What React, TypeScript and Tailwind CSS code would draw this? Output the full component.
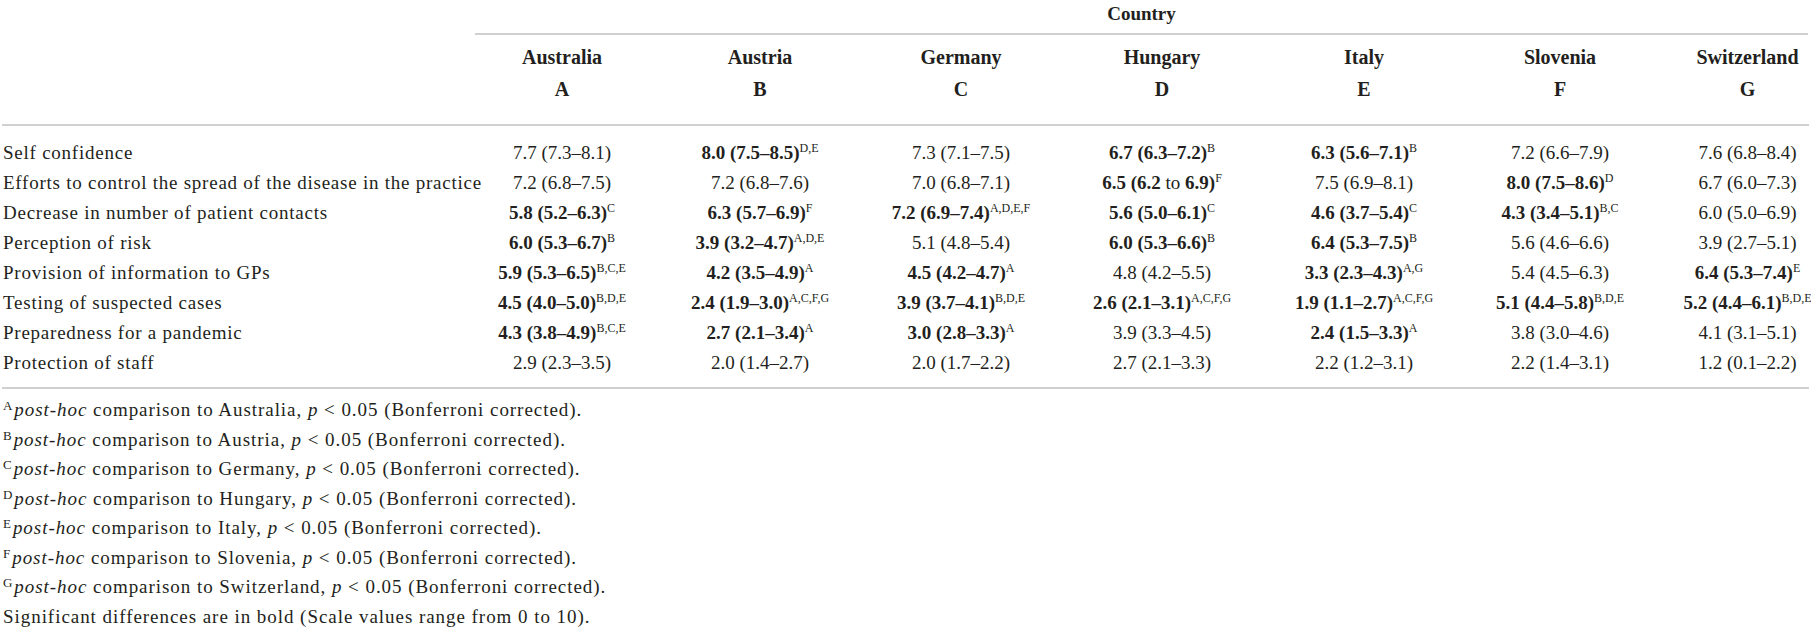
import React from 'react'

type Cell = { v: string; b?: boolean; sup?: string; to?: boolean }

const countries = [
  { name: "Australia", letter: "A" },
  { name: "Austria", letter: "B" },
  { name: "Germany", letter: "C" },
  { name: "Hungary", letter: "D" },
  { name: "Italy", letter: "E" },
  { name: "Slovenia", letter: "F" },
  { name: "Switzerland", letter: "G" },
]

const rows: { label: string; cells: Cell[] }[] = [
  {
    label: "Self confidence",
    cells: [
      { v: "7.7 (7.3–8.1)" },
      { v: "8.0 (7.5–8.5)", b: true, sup: "D,E" },
      { v: "7.3 (7.1–7.5)" },
      { v: "6.7 (6.3–7.2)", b: true, sup: "B" },
      { v: "6.3 (5.6–7.1)", b: true, sup: "B" },
      { v: "7.2 (6.6–7.9)" },
      { v: "7.6 (6.8–8.4)" },
    ],
  },
  {
    label: "Efforts to control the spread of the disease in the practice",
    cells: [
      { v: "7.2 (6.8–7.5)" },
      { v: "7.2 (6.8–7.6)" },
      { v: "7.0 (6.8–7.1)" },
      { v: "6.5 (6.2|6.9)", b: true, sup: "F", to: true },
      { v: "7.5 (6.9–8.1)" },
      { v: "8.0 (7.5–8.6)", b: true, sup: "D" },
      { v: "6.7 (6.0–7.3)" },
    ],
  },
  {
    label: "Decrease in number of patient contacts",
    cells: [
      { v: "5.8 (5.2–6.3)", b: true, sup: "C" },
      { v: "6.3 (5.7–6.9)", b: true, sup: "F" },
      { v: "7.2 (6.9–7.4)", b: true, sup: "A,D,E,F" },
      { v: "5.6 (5.0–6.1)", b: true, sup: "C" },
      { v: "4.6 (3.7–5.4)", b: true, sup: "C" },
      { v: "4.3 (3.4–5.1)", b: true, sup: "B,C" },
      { v: "6.0 (5.0–6.9)" },
    ],
  },
  {
    label: "Perception of risk",
    cells: [
      { v: "6.0 (5.3–6.7)", b: true, sup: "B" },
      { v: "3.9 (3.2–4.7)", b: true, sup: "A,D,E" },
      { v: "5.1 (4.8–5.4)" },
      { v: "6.0 (5.3–6.6)", b: true, sup: "B" },
      { v: "6.4 (5.3–7.5)", b: true, sup: "B" },
      { v: "5.6 (4.6–6.6)" },
      { v: "3.9 (2.7–5.1)" },
    ],
  },
  {
    label: "Provision of information to GPs",
    cells: [
      { v: "5.9 (5.3–6.5)", b: true, sup: "B,C,E" },
      { v: "4.2 (3.5–4.9)", b: true, sup: "A" },
      { v: "4.5 (4.2–4.7)", b: true, sup: "A" },
      { v: "4.8 (4.2–5.5)" },
      { v: "3.3 (2.3–4.3)", b: true, sup: "A,G" },
      { v: "5.4 (4.5–6.3)" },
      { v: "6.4 (5.3–7.4)", b: true, sup: "E" },
    ],
  },
  {
    label: "Testing of suspected cases",
    cells: [
      { v: "4.5 (4.0–5.0)", b: true, sup: "B,D,E" },
      { v: "2.4 (1.9–3.0)", b: true, sup: "A,C,F,G" },
      { v: "3.9 (3.7–4.1)", b: true, sup: "B,D,E" },
      { v: "2.6 (2.1–3.1)", b: true, sup: "A,C,F,G" },
      { v: "1.9 (1.1–2.7)", b: true, sup: "A,C,F,G" },
      { v: "5.1 (4.4–5.8)", b: true, sup: "B,D,E" },
      { v: "5.2 (4.4–6.1)", b: true, sup: "B,D,E" },
    ],
  },
  {
    label: "Preparedness for a pandemic",
    cells: [
      { v: "4.3 (3.8–4.9)", b: true, sup: "B,C,E" },
      { v: "2.7 (2.1–3.4)", b: true, sup: "A" },
      { v: "3.0 (2.8–3.3)", b: true, sup: "A" },
      { v: "3.9 (3.3–4.5)" },
      { v: "2.4 (1.5–3.3)", b: true, sup: "A" },
      { v: "3.8 (3.0–4.6)" },
      { v: "4.1 (3.1–5.1)" },
    ],
  },
  {
    label: "Protection of staff",
    cells: [
      { v: "2.9 (2.3–3.5)" },
      { v: "2.0 (1.4–2.7)" },
      { v: "2.0 (1.7–2.2)" },
      { v: "2.7 (2.1–3.3)" },
      { v: "2.2 (1.2–3.1)" },
      { v: "2.2 (1.4–3.1)" },
      { v: "1.2 (0.1–2.2)" },
    ],
  },
]

const notes = [
  { l: "A", c: "Australia" },
  { l: "B", c: "Austria" },
  { l: "C", c: "Germany" },
  { l: "D", c: "Hungary" },
  { l: "E", c: "Italy" },
  { l: "F", c: "Slovenia" },
  { l: "G", c: "Switzerland" },
]

// column widths picked so each country sits where the reference has it
const grid = "grid grid-cols-[462px_196px_200px_202px_200px_204px_188px_159px]"

function Value({ cell }: { cell: Cell }) {
  let main: React.ReactNode = cell.v
  if (cell.to) {
    const [a, b] = cell.v.split("|")
    main = (
      <>
        <span className="font-bold">{a}</span> to <span className="font-bold">{b}</span>
      </>
    )
  } else if (cell.b) {
    main = <span className="font-bold">{cell.v}</span>
  }
  return (
    <span className="whitespace-nowrap">
      {main}
      {cell.sup && <sup className="text-[12px] font-normal -top-[7px]">{cell.sup}</sup>}
    </span>
  )
}

export default function App() {
  return (
    <div className="w-[1811px] h-[628px] bg-white text-[#231f20] font-['Liberation_Serif',serif] overflow-hidden">
      <div className={grid}>
        <div />
        <div className="col-span-7 ml-[13px] mr-[3px] h-[35px] border-b-2 border-[#d0d0d0] text-center text-[19px] font-bold leading-[28px]">
          Country
        </div>
      </div>

      <div className={`${grid} mx-[2px] pt-[6px] pb-[19px] border-b-2 border-[#d0d0d0]`}>
        <div />
        {countries.map((c, i) => (
          <div
            key={c.letter}
            className={`text-center text-[20px] font-bold leading-[32px] ${i === 6 ? "pl-[28px]" : ""}`}
          >
            <div>{c.name}</div>
            <div>{c.letter}</div>
          </div>
        ))}
      </div>

      <div className="mx-[2px] pt-[12px] pb-[9px] border-b-2 border-[#d0d0d0] text-[19px]">
        {rows.map((r) => (
          <div key={r.label} className={`${grid} h-[30px] leading-[30px]`}>
            <div className="pl-[1px] whitespace-nowrap tracking-[0.04em]">{r.label}</div>
            {r.cells.map((cell, i) => (
              <div key={i} className={`text-center ${i === 6 ? "pl-[28px]" : ""}`}>
                <Value cell={cell} />
              </div>
            ))}
          </div>
        ))}
      </div>

      <div className="pt-[6px] pl-[3px] text-[19px] leading-[29.5px] tracking-[0.05em]">
        {notes.map((n) => (
          <div key={n.l} className="whitespace-nowrap">
            <sup className="text-[13px] -top-[6px] mr-[1px]">{n.l}</sup>
            <i>post-hoc</i> comparison to {n.c}, <i>p</i> &lt; 0.05 (Bonferroni corrected).
          </div>
        ))}
        <div>Significant differences are in bold (Scale values range from 0 to 10).</div>
      </div>
    </div>
  )
}
